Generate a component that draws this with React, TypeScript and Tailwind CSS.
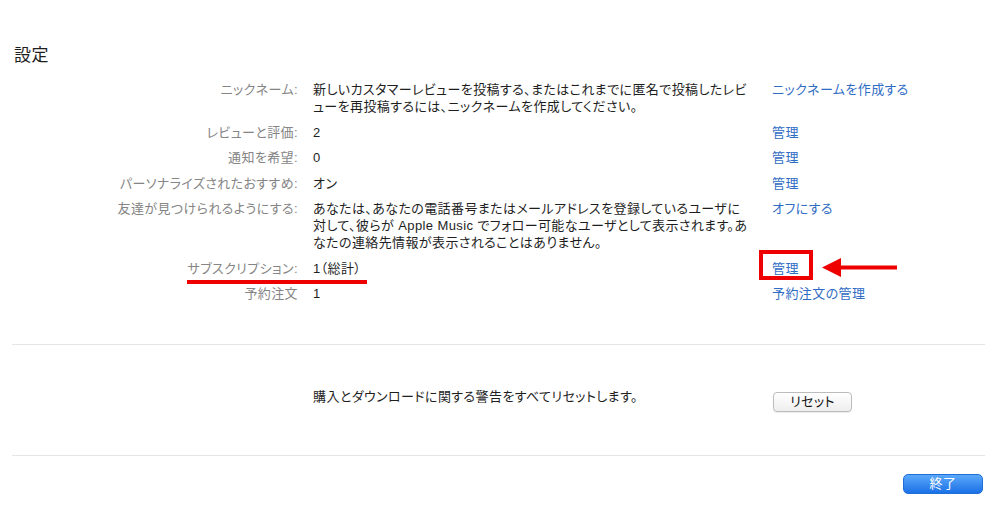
import React from 'react';

const font = "font-['Liberation_Sans','Noto_Sans_CJK_JP',sans-serif] [font-feature-settings:'palt'] tracking-[0.4px]";

type Row = {
  label: string;
  value: React.ReactNode;
  action: string;
};

const rows: Row[] = [
  {
    label: 'ニックネーム:',
    value: (
      <>
        新しいカスタマーレビューを投稿する、またはこれまでに匿名で投稿したレビ
        <br />
        ューを再投稿するには、ニックネームを作成してください。
      </>
    ),
    action: 'ニックネームを作成する',
  },
  { label: 'レビューと評価:', value: '2', action: '管理' },
  { label: '通知を希望:', value: '0', action: '管理' },
  { label: 'パーソナライズされたおすすめ:', value: 'オン', action: '管理' },
  {
    label: '友達が見つけられるようにする:',
    value: (
      <>
        あなたは、あなたの電話番号またはメールアドレスを登録しているユーザに
        <br />
        対して、彼らが Apple Music でフォロー可能なユーザとして表示されます。あ
        <br />
        なたの連絡先情報が表示されることはありません。
      </>
    ),
    action: 'オフにする',
  },
  { label: 'サブスクリプション:', value: '1（総計）', action: '管理' },
  { label: '予約注文', value: '1', action: '予約注文の管理' },
];

const SettingsRow = ({ row }: { row: Row }) => (
  <div className="flex items-start leading-[17px]">
    <div className="w-[286px] shrink-0 text-right text-[#858585]">{row.label}</div>
    <div className="ml-[15px] w-[459px] shrink-0 text-[#1e1e1e]">{row.value}</div>
    <a className="text-[#2f6cc4] cursor-pointer">{row.action}</a>
  </div>
);

export default function App() {
  return (
    <div className={`relative h-[517px] w-[1000px] overflow-hidden bg-white text-[13px] ${font}`}>
      <div className="pl-[12px] pr-[15px]">
        <h1 className="pl-[2px] pt-[46px] text-[17px] leading-[20px] text-[#1e1e1e]">設定</h1>

        <div className="mt-[15px] flex flex-col gap-[8.5px]">
          {rows.map((row, i) => (
            <SettingsRow key={i} row={row} />
          ))}
        </div>

        <div className="mt-[42px] border-t border-[#e6e6e6]" />

        <div className="flex items-start pt-[43px] pb-[43px] leading-[17px]">
          <div className="ml-[301px] w-[459px] shrink-0 text-[#1e1e1e]">
            購入とダウンロードに関する警告をすべてリセットします。
          </div>
          <button className="mt-[4px] ml-[1px] h-[20px] w-[79px] rounded-[4px] border border-[#bcbcbc] bg-gradient-to-b from-white to-[#eeeeee] text-[13px] leading-[18px] text-[#111] shadow-[0_1px_1px_rgba(0,0,0,0.08)]">
            リセット
          </button>
        </div>

        <div className="border-t border-[#e6e6e6]" />

        <div className="flex justify-end pt-[18px] pr-[2px]">
          <button className="h-[20px] w-[80px] rounded-[5px] border border-[#1f6fd8] bg-gradient-to-b from-[#5aa8fa] to-[#1a70e6] text-[13px] leading-[18px] text-white">
            終了
          </button>
        </div>
      </div>

      {/* annotations */}
      <div className="absolute left-[187px] top-[280px] h-[4px] w-[180px] bg-[#ee0000]" />
      <div className="absolute left-[759px] top-[250px] h-[30px] w-[54px] border-[4px] border-[#ee0000]" />
      <svg className="absolute left-[820px] top-[257px]" width="80" height="21" viewBox="0 0 80 21">
        <polygon points="2,10.5 21,1 21,20" fill="#ee0000" />
        <rect x="20" y="8.5" width="57" height="4" fill="#ee0000" />
      </svg>
    </div>
  );
}
